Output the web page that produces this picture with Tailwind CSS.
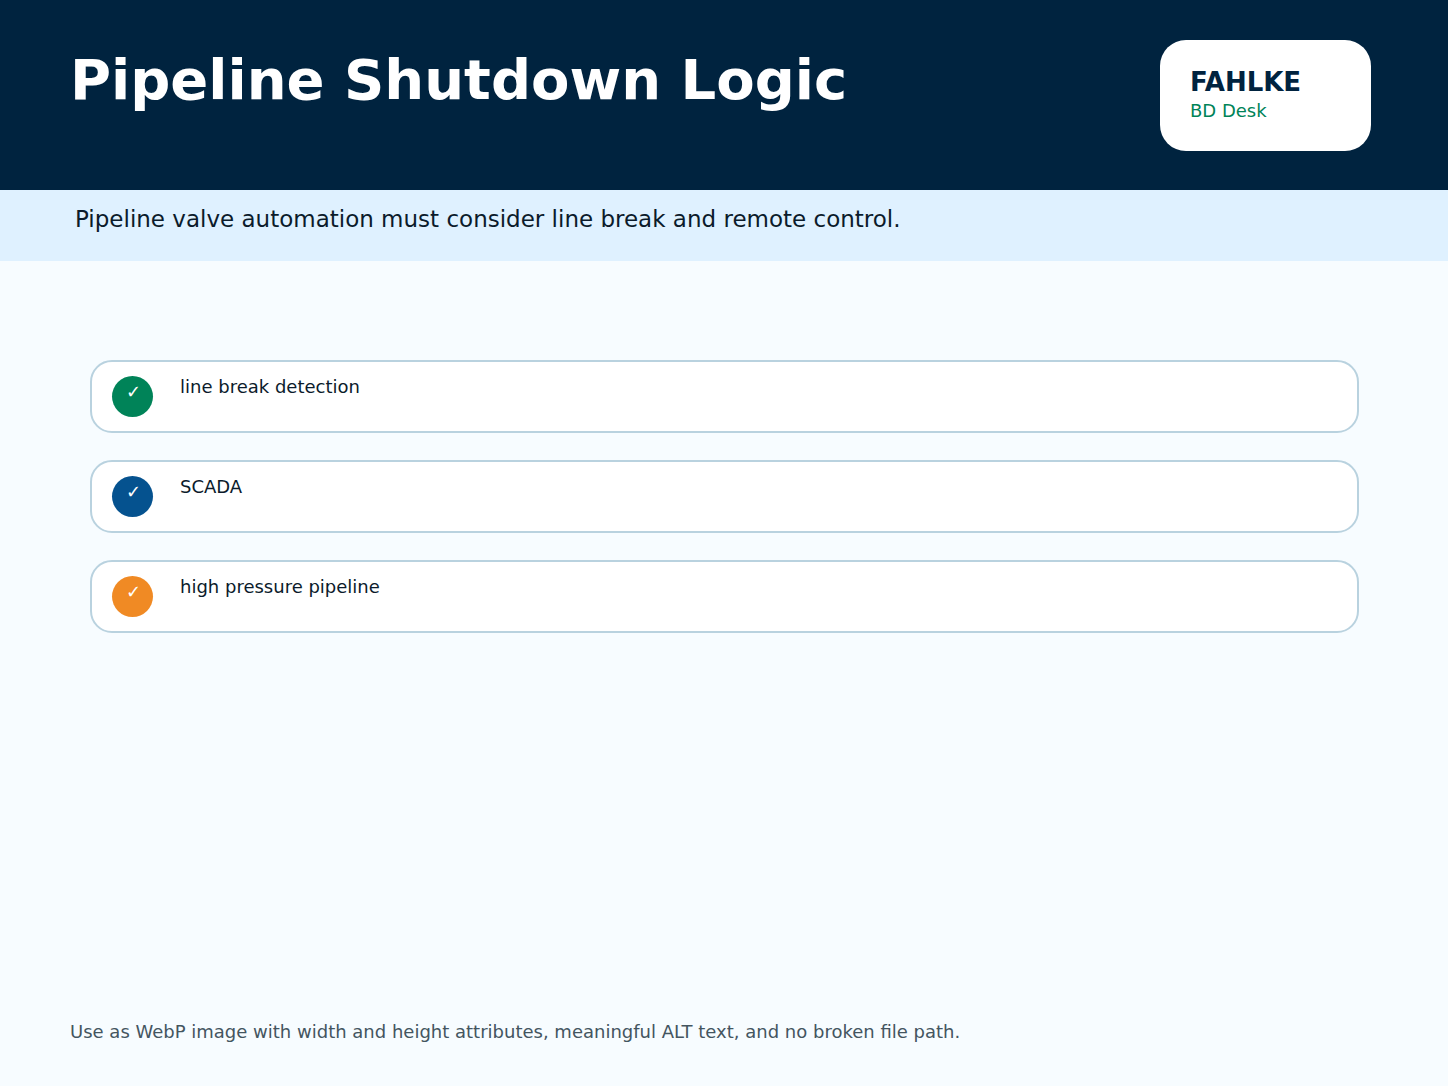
<!DOCTYPE html>
<html lang="en">
<head>
  <meta charset="UTF-8">
  <title>Pipeline Shutdown Logic</title>
  <script src="https://cdn.jsdelivr.net/npm/@tailwindcss/browser@4"></script>
</head>
<body class="min-h-screen bg-[#f7fcff] font-['DejaVu_Sans',sans-serif]">
  <div class="flex flex-col h-[1086px] overflow-hidden">
    <header class="h-[190px] bg-[#00233f] flex justify-between items-start pl-[70px] pr-[77px]">
      <h1 class="mt-[46px] text-[56px] leading-[68px] font-bold text-white">Pipeline Shutdown Logic</h1>
      <div class="mt-[40px] w-[211px] h-[111px] bg-white rounded-[26px] pl-[30px] pt-[26px]">
        <div class="text-[26px] leading-[32px] font-bold text-[#00233f]">FAHLKE</div>
        <div class="text-[18px] leading-[22px] mt-[2px] text-[#008358]">BD Desk</div>
      </div>
    </header>
    <div class="h-[71px] bg-[#dff1ff] pl-[75px] pt-[15px]">
      <p class="text-[23px] leading-[28px] text-[#0b1b2b]">Pipeline valve automation must consider line break and remote control.</p>
    </div>
    <main class="flex flex-col gap-[27px] pt-[99px] pl-[90px] pr-[89px] flex-1">
      <div class="h-[73px] bg-white border-2 border-[#b9d2df] rounded-[22px] flex items-start pl-[20px] pt-[14px]">
        <div class="w-[41px] h-[41px] pl-[2px] rounded-full bg-[#008358] text-white text-[18px] leading-[32px] text-center shrink-0">✓</div>
        <span class="ml-[27px] text-[18px] leading-[22px] text-[#0b1b2b]">line break detection</span>
      </div>
      <div class="h-[73px] bg-white border-2 border-[#b9d2df] rounded-[22px] flex items-start pl-[20px] pt-[14px]">
        <div class="w-[41px] h-[41px] pl-[2px] rounded-full bg-[#05528f] text-white text-[18px] leading-[32px] text-center shrink-0">✓</div>
        <span class="ml-[27px] text-[18px] leading-[22px] text-[#0b1b2b]">SCADA</span>
      </div>
      <div class="h-[73px] bg-white border-2 border-[#b9d2df] rounded-[22px] flex items-start pl-[20px] pt-[14px]">
        <div class="w-[41px] h-[41px] pl-[2px] rounded-full bg-[#f08a24] text-white text-[18px] leading-[32px] text-center shrink-0">✓</div>
        <span class="ml-[27px] text-[18px] leading-[22px] text-[#0b1b2b]">high pressure pipeline</span>
      </div>
    </main>
    <footer class="pl-[70px] pb-[42px]">
      <p class="text-[18px] leading-[24px] text-[#44555f]">Use as WebP image with width and height attributes, meaningful ALT text, and no broken file path.</p>
    </footer>
  </div>
</body>
</html>
